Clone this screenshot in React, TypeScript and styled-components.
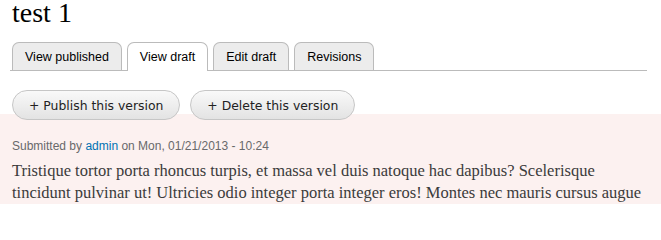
import React from "react";
import styled, { createGlobalStyle } from "styled-components";

const Global = createGlobalStyle`
  html, body { margin: 0; padding: 0; background: #fff; }
  body { overflow: hidden; }
`;

const Page = styled.div`
  width: 661px;
  height: 204px;
  overflow: hidden;
`;

const Header = styled.div`
  padding: 0 14px 0 12px;
`;

const Title = styled.h1`
  margin: 0;
  font-family: "Liberation Serif", serif;
  font-weight: normal;
  font-size: 28px;
  line-height: 32px;
  margin-top: -3px;
  color: #000;
`;

const Tabs = styled.ul`
  list-style: none;
  margin: 13px 0 0 -2px;
  padding: 0 0 0 2px;
  display: flex;
  gap: 5px;
  border-bottom: 1px solid #bbb;
`;

const Tab = styled.li<{ $active?: boolean }>`
  font-family: "Liberation Sans", Arial, sans-serif;
  font-size: 12.5px;
  color: #000;
  line-height: 28px;
  padding: 0 12px;
  border: 1px solid #bbb;
  border-bottom: none;
  border-radius: 7px 7px 0 0;
  background: ${(p) => (p.$active ? "#fff" : "#ececec")};
  margin-bottom: ${(p) => (p.$active ? "-1px" : "0")};
  height: ${(p) => (p.$active ? "28px" : "27px")};
`;

const Actions = styled.div`
  display: flex;
  gap: 10px;
  margin-top: 19px;
  position: relative;
  z-index: 1;
  margin-bottom: -6px;
`;

const Button = styled.button`
  font-family: "DejaVu Sans", sans-serif;
  font-size: 12.4px;
  color: #222;
  height: 30px;
  padding: 0 16px;
  border: 1px solid #c6c6c6;
  border-radius: 15px;
  background: linear-gradient(#f9f9f9, #e3e3e3);
  cursor: pointer;
`;

const Node = styled.div`
  background: #fcf1f0;
  padding: 24px 14px 0 12px;
  height: 100px;
`;

const Meta = styled.div`
  font-family: "Liberation Sans", Arial, sans-serif;
  font-size: 12px;
  line-height: 16px;
  color: #68696b;
`;

const Link = styled.a`
  color: #0071b3;
  text-decoration: none;
`;

const Body = styled.p`
  margin: 6px 0 0;
  font-family: "Liberation Serif", serif;
  font-size: 16.5px;
  line-height: 22px;
  color: #3b3b3b;
`;

export default function App() {
  return (
    <Page>
      <Global />
      <Header>
        <Title>test 1</Title>
        <Tabs>
          <Tab>View published</Tab>
          <Tab $active>View draft</Tab>
          <Tab>Edit draft</Tab>
          <Tab>Revisions</Tab>
        </Tabs>
        <Actions>
          <Button>+ Publish this version</Button>
          <Button>+ Delete this version</Button>
        </Actions>
      </Header>
      <Node>
        <Meta>
          Submitted by <Link href="#">admin</Link> on Mon, 01/21/2013 - 10:24
        </Meta>
        <Body>
          Tristique tortor porta rhoncus turpis, et massa vel duis natoque hac dapibus? Scelerisque
          tincidunt pulvinar ut! Ultricies odio integer porta integer eros! Montes nec mauris cursus augue
          dictumst, porta natoque.
        </Body>
      </Node>
    </Page>
  );
}
